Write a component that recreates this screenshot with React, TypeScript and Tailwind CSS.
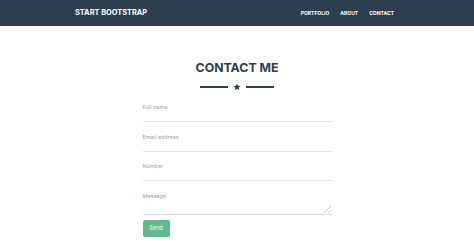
import React from "react";

function Field({ label }: { label: string }) {
  return (
    <div className="flex flex-col">
      <label className="mt-[10.5px] text-[5.3px] leading-[8px] tracking-[0.1px] text-[#9aa1a7]">{label}</label>
      <input className="h-[11px] w-full border-0 border-b border-[#dfe3e6] bg-transparent outline-none" />
    </div>
  );
}

export default function App() {
  return (
    <div className="min-h-[241px] bg-white" style={{ fontFamily: "Inter, 'Noto Sans', sans-serif" }}>
      <nav className="flex h-[26px] items-center justify-between bg-[#2c3e50] pl-[75px] pr-[80px]">
        <span className="text-[7.4px] font-bold leading-none text-white">START BOOTSTRAP</span>
        <ul className="mt-[1px] flex gap-[11px] text-[5px] font-bold leading-none text-white">
          <li>PORTFOLIO</li>
          <li>ABOUT</li>
          <li>CONTACT</li>
        </ul>
      </nav>
      <section className="flex flex-col items-center pt-[34px]">
        <h2 className="text-[12.3px] font-bold leading-[16px] text-[#2c3e50]">CONTACT ME</h2>
        <div className="mt-[7px] flex h-[8px] items-center gap-[5px]">
          <div className="h-[2px] w-[28px] bg-[#2c3e50]" />
          <svg width="8" height="8" viewBox="0 0 24 24" fill="#2c3e50">
            <path d="M12 1.5l3.1 6.9 7.4.7-5.6 5 1.7 7.4L12 17.6l-6.6 3.9 1.7-7.4-5.6-5 7.4-.7z" />
          </svg>
          <div className="h-[2px] w-[28px] bg-[#2c3e50]" />
        </div>
        <form className="flex w-[189px] flex-col pt-[1.5px]" onSubmit={(e) => e.preventDefault()}>
          <Field label="Full name" />
          <Field label="Email address" />
          <Field label="Number" />
          <div className="flex flex-col">
            <label className="mt-[10.5px] text-[5.3px] leading-[8px] tracking-[0.1px] text-[#9aa1a7]">Message</label>
            <textarea className="block h-[15.5px] w-full resize-y border-0 border-b border-[#9aa3ab] bg-transparent opacity-35 outline-none" />
          </div>
          <div className="mt-[5px]">
            <button className="flex h-[17px] w-[27px] items-center justify-center rounded-[2px] bg-[#62b88f] text-[5.5px] leading-none text-white">
              Send
            </button>
          </div>
        </form>
      </section>
    </div>
  );
}
